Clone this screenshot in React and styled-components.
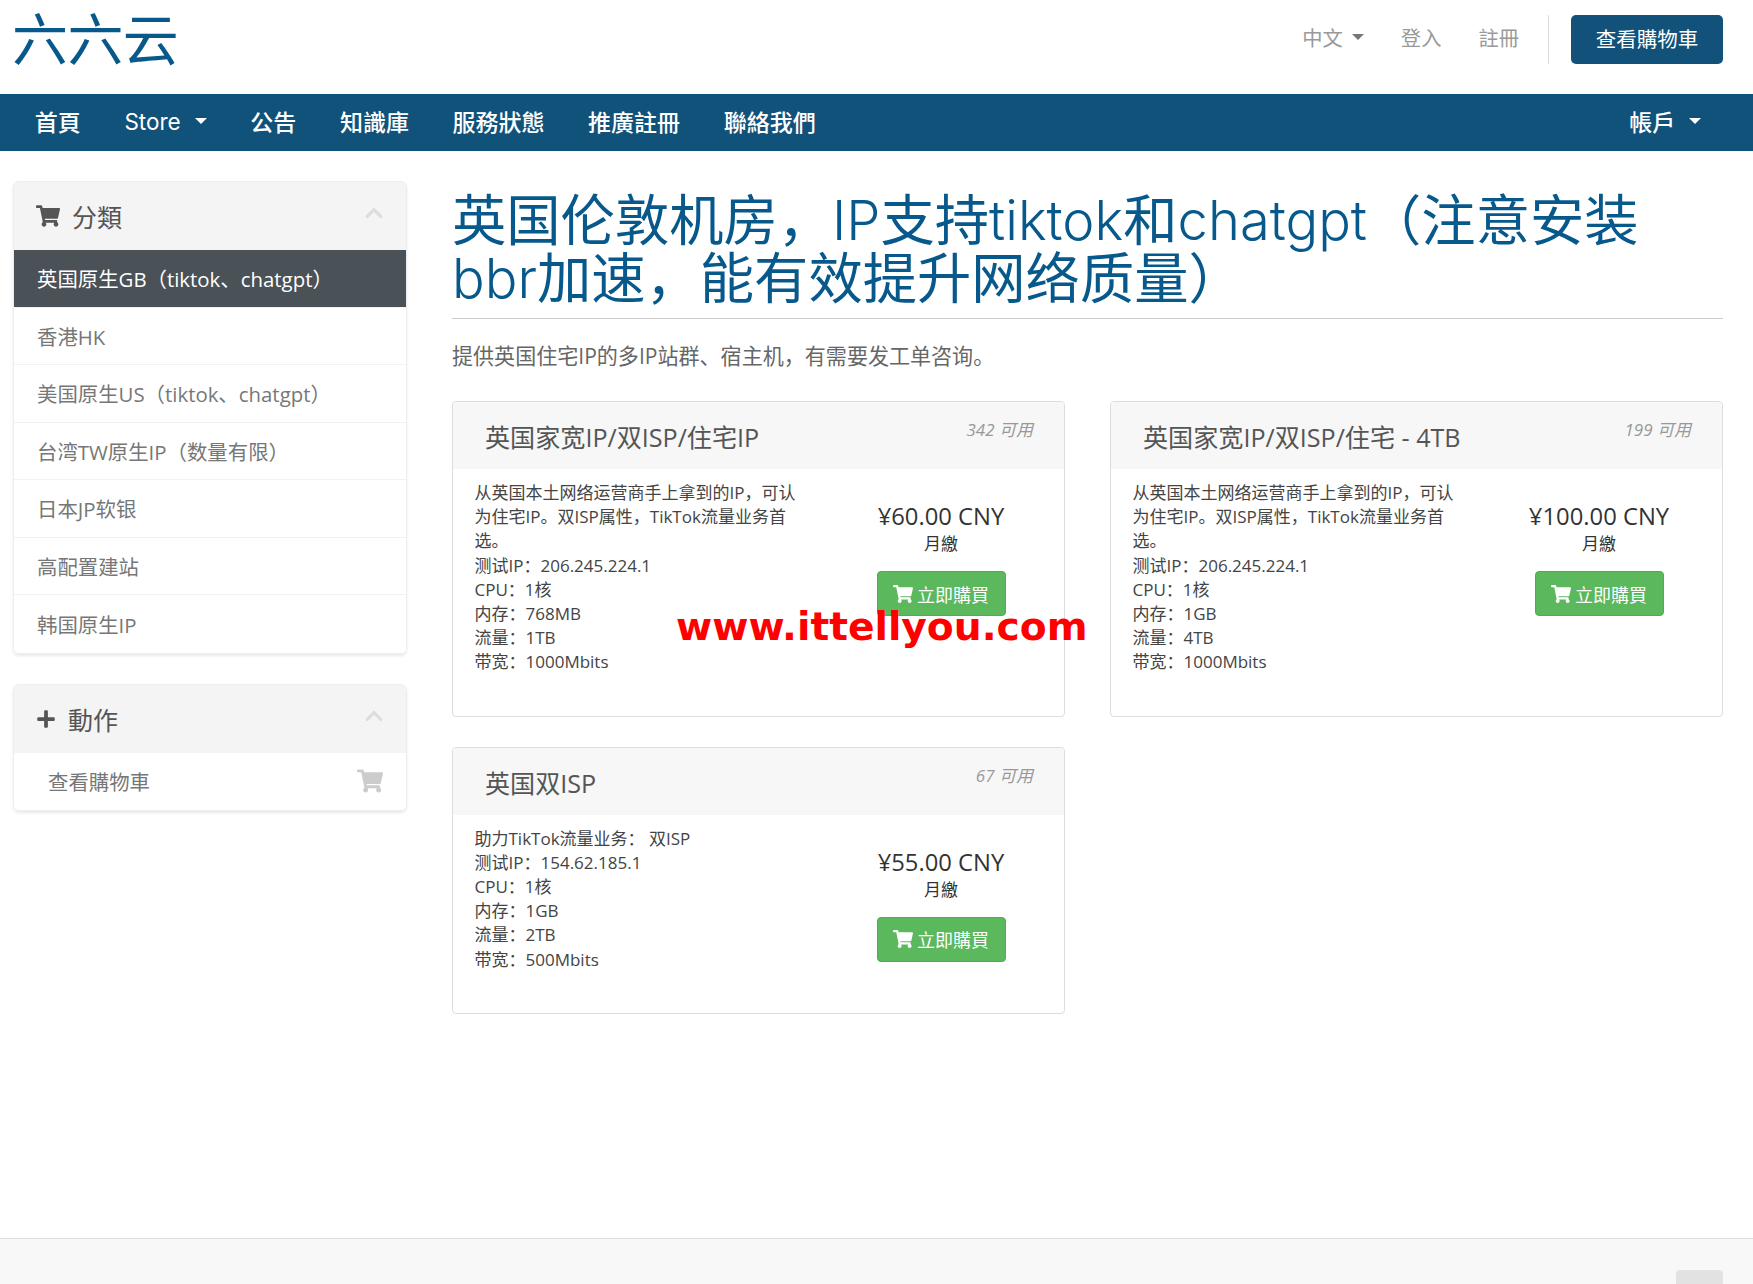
import styled, { createGlobalStyle } from 'styled-components'
import { FaShoppingCart, FaPlus, FaChevronUp } from 'react-icons/fa'

const GlobalStyle = createGlobalStyle`
  html, body, #root {
    height: 100%;
    margin: 0;
  }
  body {
    overflow: hidden;
    background: #fff;
    color: #333;
    font-family: "Open Sans", "Noto Sans CJK SC", sans-serif;
  }
`

const Page = styled.div`
  display: flex;
  flex-direction: column;
  height: 100%;
  position: relative;
`

const Header = styled.header`
  display: flex;
  align-items: center;
  justify-content: space-between;
  height: 94px;
  padding: 0 30px 0 12px;
  box-sizing: border-box;
`

const Logo = styled.div`
  font-family: "Noto Sans CJK SC", sans-serif;
  font-weight: 400;
  font-size: 56px;
  line-height: 60px;
  color: #07598c;
  letter-spacing: -0.6px;
  margin-bottom: 22px;
`

const TopLinks = styled.div`
  display: flex;
  align-items: center;
  margin-bottom: 16px;
`

const TopLink = styled.a`
  display: flex;
  align-items: center;
  gap: 9px;
  font-size: 20.3px;
  color: #999;
  margin: 0 37px 5px 0;
  &:nth-child(3) {
    margin-right: 29px;
  }
`

const Divider = styled.div`
  width: 1px;
  height: 49px;
  background: #ddd;
  margin-right: 22px;
`

const CartButton = styled.a`
  display: block;
  width: 152px;
  height: 49px;
  line-height: 49px;
  text-align: center;
  background: #11517a;
  color: #fff;
  border-radius: 5px;
  font-size: 20.5px;
`

const Caret = styled.span`
  display: inline-block;
  width: 0;
  height: 0;
  border-left: 6px solid transparent;
  border-right: 6px solid transparent;
  border-top: 6px solid ${(p) => p.$color || '#fff'};
`

const Nav = styled.nav`
  display: flex;
  align-items: center;
  justify-content: space-between;
  height: 57px;
  background: #11527a;
  padding: 0 30px 0 13px;
`

const NavGroup = styled.div`
  display: flex;
`

const NavItem = styled.a`
  display: flex;
  align-items: center;
  gap: 14px;
  padding: 0 21.8px 3px;
  font-family: Inter, "Noto Sans CJK SC", sans-serif;
  font-size: ${(p) => (p.$latin ? '22.5px' : '23px')};
  font-weight: ${(p) => (p.$latin ? 400 : 500)};
  color: #fff;
`

const Layout = styled.div`
  display: flex;
  gap: 45.5px;
  padding: 30px 30px 0 13px;
  flex: 1;
`

const Sidebar = styled.aside`
  width: 393.5px;
  flex-shrink: 0;
  display: flex;
  flex-direction: column;
  gap: 30px;
`

const Panel = styled.div`
  border: 1px solid #eee;
  border-radius: 6px;
  overflow: hidden;
  box-shadow: 0 2px 3px rgba(0, 0, 0, 0.09);
`

const PanelHead = styled.div`
  display: flex;
  align-items: center;
  height: 68px;
  padding: 0 22px;
  background: #f4f4f4;
  color: #555;
`

const PanelTitle = styled.span`
  font-size: 25px;
  margin-left: 12px;
  flex: 1;
`

const Collapse = styled(FaChevronUp)`
  color: #ddd;
  font-size: 20px;
  margin-bottom: 6px;
`

const SideItem = styled.a`
  display: flex;
  align-items: center;
  justify-content: space-between;
  box-sizing: border-box;
  height: 57.5px;
  padding: ${(p) => (p.$indent ? '0 23px 0 34px' : '0 23px')};
  font-size: 20.4px;
  color: ${(p) => (p.$active ? '#fff' : '#777')};
  background: ${(p) => (p.$active ? '#4a5157' : '#fff')};
  border-bottom: 1px solid #f2f2f2;
  &:last-child {
    border-bottom: 0;
  }
`

const SideCart = styled(FaShoppingCart)`
  color: #ccc;
  font-size: 26px;
`

const Main = styled.main`
  flex: 1;
  min-width: 0;
`

const Title = styled.h1`
  margin: 7px 0 0;
  padding-bottom: 14px;
  border-bottom: 1px solid #ccc;
  font-family: "Noto Sans CJK SC", sans-serif;
  font-weight: 400;
  font-size: 54.3px;
  line-height: 58px;
  color: #07598c;
`

const TitleLatin = styled.span`
  font-family: Inter, sans-serif;
  font-weight: 300;
  line-height: 0;
`

const Lead = styled.p`
  margin: 23px 0 31px;
  font-size: 21.05px;
  line-height: 28px;
  color: #666;
`

const Cards = styled.div`
  display: grid;
  grid-template-columns: 613px 613px;
  column-gap: 45px;
  row-gap: 30px;
  align-items: start;
`

const Card = styled.div`
  border: 1px solid #ddd;
  border-radius: 4px;
  overflow: hidden;
`

const CardHead = styled.div`
  display: flex;
  justify-content: space-between;
  height: 67px;
  padding: 0 31px 0 32px;
  background: #f7f7f7;
`

const CardTitle = styled.span`
  font-size: 25.1px;
  line-height: 70px;
  color: #555;
`

const Qty = styled.span`
  font-size: 17px;
  line-height: 56px;
  font-style: italic;
  color: #999;
`

const CardBody = styled.div`
  display: flex;
  justify-content: space-between;
  padding: 12px 0 41px 21.5px;
`

const Desc = styled.div`
  width: 332px;
  font-size: 17px;
  line-height: 24.2px;
  color: #444;
`

const Pricing = styled.div`
  width: 246px;
  display: flex;
  flex-direction: column;
  align-items: center;
  padding-top: 19px;
`

const Price = styled.div`
  font-size: 23.8px;
  line-height: 32px;
  color: #333;
`

const Cycle = styled.div`
  font-size: 17px;
  line-height: 24px;
`

const BuyButton = styled.a`
  display: flex;
  align-items: center;
  justify-content: center;
  gap: 4px;
  width: 129px;
  height: 45px;
  margin-top: 15px;
  box-sizing: border-box;
  background: #5cb85c;
  border: 1px solid #4cae4c;
  border-radius: 4px;
  color: #fff;
  font-size: 18px;
`

const Watermark = styled.div`
  position: absolute;
  left: 676px;
  top: 603px;
  font-family: "DejaVu Sans", sans-serif;
  font-weight: 700;
  font-size: 39.2px;
  line-height: 48px;
  color: #f00;
  white-space: nowrap;
`

const Footer = styled.footer`
  height: 46px;
  flex-shrink: 0;
  box-sizing: border-box;
  padding: 31px 30px 0;
  background: #f8f8f8;
  border-top: 1px solid #ddd;
  overflow: hidden;
`

const BackToTop = styled.div`
  width: 47px;
  height: 40px;
  margin-left: auto;
  border-radius: 4px;
  background: #e2e2e2;
`

const categories = [
  '英国原生GB（tiktok、chatgpt）',
  '香港HK',
  '美国原生US（tiktok、chatgpt）',
  '台湾TW原生IP（数量有限）',
  '日本JP软银',
  '高配置建站',
  '韩国原生IP',
]

const homeIntro = [
  '从英国本土网络运营商手上拿到的IP，可认为住宅IP。双ISP属性，TikTok流量业务首选。',
  '测试IP：206.245.224.1',
  'CPU：1核',
]

const products = [
  {
    name: '英国家宽IP/双ISP/住宅IP',
    qty: '342 可用',
    price: '¥60.00 CNY',
    lines: [...homeIntro, '内存：768MB', '流量：1TB', '带宽：1000Mbits'],
  },
  {
    name: '英国家宽IP/双ISP/住宅 - 4TB',
    qty: '199 可用',
    price: '¥100.00 CNY',
    lines: [...homeIntro, '内存：1GB', '流量：4TB', '带宽：1000Mbits'],
  },
  {
    name: '英国双ISP',
    qty: '67 可用',
    price: '¥55.00 CNY',
    lines: [
      '助力TikTok流量业务： 双ISP',
      '测试IP：154.62.185.1',
      'CPU：1核',
      '内存：1GB',
      '流量：2TB',
      '带宽：500Mbits',
    ],
  },
]

export default function App() {
  return (
    <Page>
      <GlobalStyle />
      <Header>
        <Logo>六六云</Logo>
        <TopLinks>
          <TopLink>
            中文 <Caret $color="#777" />
          </TopLink>
          <TopLink>登入</TopLink>
          <TopLink>註冊</TopLink>
          <Divider />
          <CartButton>查看購物車</CartButton>
        </TopLinks>
      </Header>
      <Nav>
        <NavGroup>
          <NavItem>首頁</NavItem>
          <NavItem $latin>
            Store <Caret />
          </NavItem>
          <NavItem>公告</NavItem>
          <NavItem>知識庫</NavItem>
          <NavItem>服務狀態</NavItem>
          <NavItem>推廣註冊</NavItem>
          <NavItem>聯絡我們</NavItem>
        </NavGroup>
        <NavItem>
          帳戶 <Caret />
        </NavItem>
      </Nav>
      <Layout>
        <Sidebar>
          <Panel>
            <PanelHead>
              <FaShoppingCart size={24} />
              <PanelTitle>分類</PanelTitle>
              <Collapse />
            </PanelHead>
            {categories.map((c, i) => (
              <SideItem key={c} $active={i === 0}>
                {c}
              </SideItem>
            ))}
          </Panel>
          <Panel>
            <PanelHead>
              <FaPlus size={20} />
              <PanelTitle>動作</PanelTitle>
              <Collapse />
            </PanelHead>
            <SideItem $indent>
              查看購物車
              <SideCart />
            </SideItem>
          </Panel>
        </Sidebar>
        <Main>
          <Title>
            英国伦敦机房，<TitleLatin>IP</TitleLatin>支持
            <TitleLatin>tiktok</TitleLatin>和<TitleLatin>chatgpt</TitleLatin>
            （注意安装
            <br />
            <TitleLatin>bbr</TitleLatin>加速，能有效提升网络质量）
          </Title>
          <Lead>提供英国住宅IP的多IP站群、宿主机，有需要发工单咨询。</Lead>
          <Cards>
            {products.map((p) => (
              <Card key={p.name}>
                <CardHead>
                  <CardTitle>{p.name}</CardTitle>
                  <Qty>{p.qty}</Qty>
                </CardHead>
                <CardBody>
                  <Desc>
                    {p.lines.map((l) => (
                      <div key={l}>{l}</div>
                    ))}
                  </Desc>
                  <Pricing>
                    <Price>{p.price}</Price>
                    <Cycle>月繳</Cycle>
                    <BuyButton>
                      <FaShoppingCart size={20} />
                      立即購買
                    </BuyButton>
                  </Pricing>
                </CardBody>
              </Card>
            ))}
          </Cards>
        </Main>
      </Layout>
      <Footer>
        <BackToTop />
      </Footer>
      <Watermark>www.ittellyou.com</Watermark>
    </Page>
  )
}
